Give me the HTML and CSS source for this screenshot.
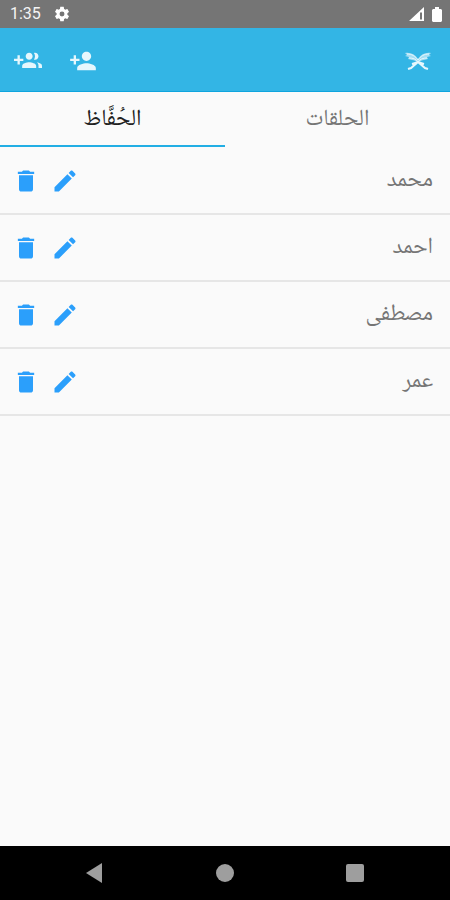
FILE: index.html
```html
<!DOCTYPE html>
<html lang="ar">
<head>
    <meta charset="UTF-8">
    <meta name="viewport" content="width=device-width, initial-scale=1.0">
    <title>الحفاظ</title>
    <link rel="stylesheet" href="styles.css">
</head>
<body>
    <!-- shared icons -->
    <svg class="icon-defs" aria-hidden="true">
        <symbol id="icon-delete" viewBox="0 0 24 24">
            <path d="M6 19c0 1.100.900 2 2 2h8c1.100 0 2-.900 2-2V7H6v12zM19 4h-3.500l-1-1h-5l-1 1H5v2h14V4z"/>
        </symbol>
        <symbol id="icon-edit" viewBox="0 0 24 24">
            <path d="M3 17.250V21h3.750L17.810 9.940l-3.750-3.750L3 17.250zM20.710 7.040c.390-.390.390-1.020 0-1.410l-2.340-2.340c-.390-.390-1.020-.390-1.410 0l-1.830 1.830 3.750 3.750 1.830-1.830z"/>
        </symbol>
    </svg>

    <div class="status-bar">
        <span class="clock">1:35</span>
        <svg class="status-gear" viewBox="0 0 24 24" aria-hidden="true">
            <path d="M19.140 12.940c.04-.3.06-.61.06-.94 0-.32-.02-.64-.07-.94l2.030-1.580c.18-.14.23-.41.12-.61l-1.920-3.320c-.12-.22-.37-.29-.59-.22l-2.390.96c-.5-.38-1.030-.7-1.620-.94l-.36-2.540c-.04-.24-.24-.41-.48-.41h-3.840c-.24 0-.43.17-.47.41l-.36 2.540c-.59.24-1.130.57-1.620.94l-2.390-.96c-.22-.08-.47 0-.59.22L2.740 8.870c-.12.21-.08.47.12.61l2.030 1.580c-.05.3-.09.63-.09.94s.02.64.07.94l-2.030 1.580c-.18.14-.23.41-.12.61l1.920 3.320c.12.22.37.29.59.22l2.390-.96c.5.38 1.030.7 1.620.94l.36 2.540c.05.24.24.41.48.41h3.840c.24 0 .44-.17.47-.41l.36-2.540c.59-.24 1.130-.56 1.620-.94l2.390.96c.22.08.47 0 .59-.22l1.920-3.320c.12-.22.07-.47-.12-.61l-2.010-1.580zM12 15.300A3.300 3.300 0 1 1 12 8.700a3.300 3.300 0 0 1 0 6.600z"/>
        </svg>
        <svg class="status-signal" viewBox="0 0 15 14" aria-hidden="true">
            <path fill-rule="evenodd" d="M0 14L15 0v14zM11 5.500v7h2v-7z"/>
        </svg>
        <svg class="status-battery" viewBox="0 0 10 15" aria-hidden="true">
            <path d="M3 0h4v2h2l1 1v11l-1 1H1l-1-1V3l1-1h2z"/>
        </svg>
    </div>

    <header class="app-bar">
        <button class="bar-button" type="button" aria-label="إضافة حلقة">
            <svg viewBox="0 0 24 24">
                <path d="M8 10H5V7H3v3H0v2h3v3h2v-3h3v-2zm10 1c1.660 0 2.990-1.340 2.990-3S19.660 5 18 5c-.32 0-.63.05-.91.14.57.81.9 1.790.9 2.860s-.34 2.040-.9 2.860c.28.09.59.14.91.14zm-5 0c1.660 0 2.990-1.340 2.990-3S14.660 5 13 5c-1.660 0-3 1.340-3 3s1.340 3 3 3zm6.620 2.160c.83.73 1.380 1.660 1.380 2.840v2h3v-2c0-1.540-2.370-2.490-4.380-2.840zM13 13c-2 0-6 1-6 3v2h12v-2c0-2-4-3-6-3z"/>
            </svg>
        </button>
        <button class="bar-button" type="button" aria-label="إضافة حافظ">
            <svg viewBox="0 0 24 24">
                <path d="M15 12c2.210 0 4-1.790 4-4s-1.790-4-4-4-4 1.790-4 4 1.790 4 4 4zm-9-2V7H4v3H1v2h3v3h2v-3h3v-2H6zm9 4c-2.670 0-8 1.340-8 4v2h16v-2c0-2.660-5.330-4-8-4z"/>
            </svg>
        </button>
        <!-- open book on a stand -->
        <svg class="book-logo" viewBox="0 0 28 20" aria-hidden="true">
            <path class="book-pages" d="M14 8C11 3 6 1 1 2l2 2-2 1 4 1-1 2 4 1c2 0 4 1 6 3 2-2 4-3 6-3l4-1-1-2 4-1-2-1 2-2c-5-1-10 1-13 6z"/>
            <path class="book-lines" d="M3 3c5 0 8 2 11 6 3-4 6-6 11-6M5 7c4 0 7 1 9 4 2-3 5-4 9-4"/>
            <path class="book-stand" d="M4 18l3-1 7-6 7 6 3 1M8 13l6-2 6 2"/>
        </svg>
    </header>

    <nav class="tabs">
        <a class="tab tab-active" href="#students" dir="rtl">الحُفَّاظ</a>
        <a class="tab" href="#circles" dir="rtl">الحلقات</a>
    </nav>

    <main class="content" id="students">
        <ul class="student-list">
            <li class="student">
                <button class="row-button" type="button" aria-label="حذف"><svg><use href="#icon-delete"/></svg></button>
                <button class="row-button" type="button" aria-label="تعديل"><svg><use href="#icon-edit"/></svg></button>
                <span class="student-name" dir="rtl">محمد</span>
            </li>
            <li class="student">
                <button class="row-button" type="button" aria-label="حذف"><svg><use href="#icon-delete"/></svg></button>
                <button class="row-button" type="button" aria-label="تعديل"><svg><use href="#icon-edit"/></svg></button>
                <span class="student-name" dir="rtl">احمد</span>
            </li>
            <li class="student">
                <button class="row-button" type="button" aria-label="حذف"><svg><use href="#icon-delete"/></svg></button>
                <button class="row-button" type="button" aria-label="تعديل"><svg><use href="#icon-edit"/></svg></button>
                <span class="student-name" dir="rtl">مصطفى</span>
            </li>
            <li class="student">
                <button class="row-button" type="button" aria-label="حذف"><svg><use href="#icon-delete"/></svg></button>
                <button class="row-button" type="button" aria-label="تعديل"><svg><use href="#icon-edit"/></svg></button>
                <span class="student-name" dir="rtl">عمر</span>
            </li>
        </ul>
    </main>

    <footer class="system-nav">
        <button class="nav-button" type="button" aria-label="رجوع">
            <svg viewBox="0 0 20 20"><path d="M1 10L17 0v20z"/></svg>
        </button>
        <button class="nav-button" type="button" aria-label="الرئيسية">
            <svg viewBox="0 0 20 20"><circle cx="10" cy="10" r="9"/></svg>
        </button>
        <button class="nav-button" type="button" aria-label="التطبيقات">
            <svg viewBox="0 0 20 20"><rect x="1" y="1" width="18" height="18" rx="2"/></svg>
        </button>
    </footer>
</body>
</html>
```

FILE: styles.css
```css
* {
    box-sizing: border-box;
}
body {
    margin: 0;
    min-height: 100vh;
    display: flex;
    flex-direction: column;
    background-color: #fafafa;
    font-family: Roboto, "Noto Naskh Arabic", "Noto Sans Arabic", "DejaVu Sans", sans-serif;
}
button {
    padding: 0;
    border: none;
    background: none;
    cursor: pointer;
}
svg {
    display: block;
}
.icon-defs {
    display: none;
}

/* status bar */
.status-bar {
    display: flex;
    align-items: center;
    height: 28px;
    padding: 0 8px 0 10px;
    background-color: #757575;
    color: #f4f4f4;
    fill: #ffffff;
}
.clock {
    font-size: 16px;
    line-height: 28px;
}
.status-gear {
    width: 18px;
    height: 18px;
    margin-left: 12px;
}
.status-signal {
    width: 15px;
    height: 14px;
    margin-left: auto;
}
.status-battery {
    width: 10px;
    height: 15px;
    margin-left: 8px;
}

/* app bar */
.app-bar {
    display: flex;
    align-items: center;
    gap: 27px;
    height: 64px;
    padding: 2px 18px 0 14px;
    background-color: #33b5e5;
    border-bottom: 1px solid #0fa5de;
}
.bar-button svg {
    width: 28px;
    height: 28px;
    fill: #e6f7fd;
}
.book-logo {
    width: 28px;
    height: 20px;
    margin-left: auto;
}
.book-pages {
    fill: #a5def4;
}
.book-lines,
.book-stand {
    fill: none;
    stroke: #e6f7fd;
    stroke-width: 1;
}
.book-stand {
    stroke-width: 2;
}

/* tabs */
.tabs {
    display: flex;
    height: 55px;
}
.tab {
    flex: 1;
    border-bottom: 2px solid transparent;
    color: #757575;
    font-size: 23px;
    line-height: 52px;
    text-align: center;
    text-decoration: none;
}
.tab-active {
    color: #212121;
    border-bottom-color: #22aee4;
}

/* students */
.content {
    flex: 1;
}
.student-list {
    margin: 0;
    padding: 1px 0 0;
    list-style: none;
}
.student {
    display: flex;
    align-items: center;
    gap: 11px;
    height: 67px;
    padding: 0 17px 0 12px;
    border-bottom: 2px solid #e6e6e6;
}
.row-button svg {
    width: 28px;
    height: 28px;
    fill: #2b9ffb;
}
.student-name {
    margin-left: auto;
    padding-bottom: 4px;
    color: #757575;
    font-size: 23px;
    line-height: 32px;
}

/* system navigation */
.system-nav {
    display: flex;
    justify-content: center;
    align-items: center;
    gap: 110px;
    height: 54px;
    background-color: #000000;
}
.nav-button svg {
    width: 20px;
    height: 20px;
    fill: #9e9e9e;
}
```
